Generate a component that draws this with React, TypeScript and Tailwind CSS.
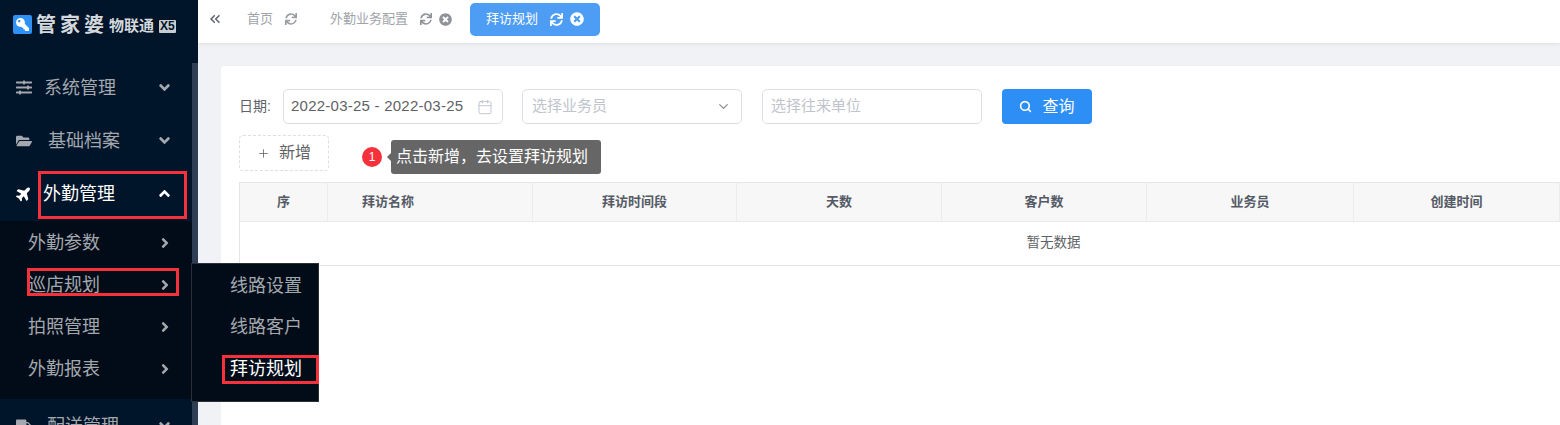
import { ChevronDown, Calendar, Plus, Search, ChevronsLeft } from "lucide-react";
import {
  FaAngleDown,
  FaAngleRight,
  FaAngleUp,
  FaFolderOpen,
  FaKey,
  FaPlane,
  FaSlidersH,
  FaSync,
  FaTimesCircle,
  FaTruck,
} from "react-icons/fa";

const FONT = "font-['Liberation_Sans','Noto_Sans_CJK_SC',sans-serif]";

const subItems = ["外勤参数", "巡店规划", "拍照管理", "外勤报表"];
const flyItems = ["线路设置", "线路客户", "拜访规划"];
const columns = [
  { title: "序", width: "w-[88px]", align: "text-center" },
  { title: "拜访名称", width: "w-[205px]", align: "text-left pl-[34px]" },
  { title: "拜访时间段", width: "w-[204px]", align: "text-center" },
  { title: "天数", width: "w-[205px]", align: "text-center" },
  { title: "客户数", width: "w-[205px]", align: "text-center" },
  { title: "业务员", width: "w-[207px]", align: "text-center" },
  { title: "创建时间", width: "w-[206px]", align: "text-center" },
];

function MenuRow({
  icon,
  label,
  open,
  active,
  gap,
}: {
  icon: React.ReactNode;
  label: string;
  open?: boolean;
  active?: boolean;
  gap: string;
}) {
  return (
    <div className={`flex h-[53px] items-center pl-4 pr-[19px] ${active ? "text-white" : "text-[#a3a8ae]"}`}>
      <span className="flex w-4 justify-center text-[17px]">{icon}</span>
      <span className={`${gap} pt-[2px] text-[18px]`}>{label}</span>
      <span className="ml-auto text-[17px]">{open ? <FaAngleUp /> : <FaAngleDown />}</span>
    </div>
  );
}

function Sidebar() {
  return (
    <aside className="relative h-full w-[198px] shrink-0 overflow-hidden bg-[#00142a]">
      <div className="flex h-[61px] items-center pb-[12px] pl-[13px] text-[#d5d9dd]">
        <span className="flex h-[19px] w-[19px] items-center justify-center rounded-[2px] bg-[#2f90f5] text-[13px] text-white">
          <FaKey className="-scale-x-100" />
        </span>
        <span className="ml-[4px] text-[20px] font-bold leading-none tracking-[4px]">管家婆</span>
        <span className="ml-[1px] mt-[2px] text-[15px] font-bold leading-none">物联通</span>
        <span className="ml-[5px] mt-[3px] rounded-[1px] bg-[#c8ccd0] px-[1px] text-[12px] font-bold leading-[13px] text-[#00142a]">
          X5
        </span>
      </div>
      <div className="w-[192px]">
        <MenuRow icon={<FaSlidersH />} label="系统管理" gap="ml-3" />
        <MenuRow icon={<FaFolderOpen className="text-[20px]" />} label="基础档案" gap="ml-4" />
        <MenuRow icon={<FaPlane className="-rotate-45 text-[17px]" />} label="外勤管理" gap="ml-[11px]" open active />
        <div className="mt-[1px] bg-[#020b18] pb-[9px] pt-[1px]">
          {subItems.map((item) => (
            <div key={item} className="flex h-[42px] items-center pl-7 pr-[19px] text-[#a3a8ae]">
              <span className="text-[18px]">{item}</span>
              <FaAngleRight className="ml-auto text-[16px]" />
            </div>
          ))}
        </div>
        <MenuRow icon={<FaTruck className="text-[18px]" />} label="配送管理" gap="ml-[15px]" />
      </div>
      <div className="absolute bottom-0 right-0 top-[63px] w-[6px] bg-[#2d3e55]" />
    </aside>
  );
}

function Tabs() {
  return (
    <header className="flex h-[43px] shrink-0 items-center bg-white pb-[5px] pl-[9px] shadow-[0_1px_4px_rgba(0,0,0,0.08)]">
      <ChevronsLeft size={16} strokeWidth={2.25} className="text-[#5b6472]" />
      <div className="ml-[24px] flex items-center text-[13px] text-[#a0a4aa]">
        <span>首页</span>
        <FaSync className="ml-[12px] text-[12px] text-[#9a9ea4]" />
      </div>
      <div className="ml-[33px] flex items-center text-[13px] text-[#a0a4aa]">
        <span>外勤业务配置</span>
        <FaSync className="ml-[12px] text-[12px] text-[#8f9399]" />
        <FaTimesCircle className="ml-[7px] text-[13px] text-[#8f9399]" />
      </div>
      <div className="ml-[18px] flex h-[33px] w-[130px] items-center rounded-[5px] bg-[#4d9df5] pl-4 text-[13px] text-white">
        <span>拜访规划</span>
        <FaSync className="ml-[12px] text-[13px]" />
        <FaTimesCircle className="ml-[7px] text-[14px]" />
      </div>
    </header>
  );
}

function Field({ className, children }: { className: string; children: React.ReactNode }) {
  return (
    <div className={`flex h-[35px] items-center rounded-[5px] border border-[#dcdfe6] bg-white text-[15px] ${className}`}>
      {children}
    </div>
  );
}

function Filters() {
  return (
    <div className="flex items-center pt-[23px]">
      <span className="w-[44px] text-[14px] text-[#606266]">日期:</span>
      <Field className="w-[220px] pl-[7px] pr-[9px] text-[#606266]">
        <span className="tracking-[0.24px]">2022-03-25 - 2022-03-25</span>
        <Calendar size={16} strokeWidth={1.25} className="ml-auto text-[#b4bccc]" />
      </Field>
      <Field className="ml-[19px] w-[220px] pl-[9px] pr-[10px] text-[#c0c4cc]">
        <span>选择业务员</span>
        <ChevronDown size={15} className="ml-auto text-[#8b8f97]" />
      </Field>
      <Field className="ml-[20px] w-[220px] pl-[8px] text-[#c0c4cc]">
        <span>选择往来单位</span>
      </Field>
      <button className="ml-[20px] flex h-[35px] w-[90px] items-center justify-center rounded-[4px] bg-[#2d8ff5] text-[16px] text-white">
        <Search size={13} strokeWidth={3} />
        <span className="ml-[10px]">查询</span>
      </button>
    </div>
  );
}

function AddRow() {
  return (
    <div className="mt-[11px] flex h-[36px] items-start">
      <button className="flex h-[36px] w-[90px] items-center justify-center rounded-[4px] border border-dashed border-[#dcdfe6] bg-white text-[16px] text-[#606266]">
        <Plus size={13} strokeWidth={1.5} />
        <span className="ml-[9px]">新增</span>
      </button>
      <span className="ml-[33px] mt-[12px] flex h-5 w-5 shrink-0 items-center justify-center rounded-full bg-[#f5323c] text-[12px] text-white">
        1
      </span>
      <div className="relative ml-[9px] mt-[5px] flex h-[34px] w-[210px] shrink-0 items-center rounded-[3px] bg-[#666666] pl-[5px] text-[16px] text-white">
        <span className="absolute -left-[4px] top-[13px] h-0 w-0 border-y-[4px] border-r-[4px] border-y-transparent border-r-[#666666]" />
        点击新增，去设置拜访规划
      </div>
    </div>
  );
}

function DataTable() {
  return (
    <div className="mt-[11px] w-[1628px] border border-r-0 border-[#e4e5e7]">
      <div className="flex h-[39px] border-b border-[#e8e9eb]">
        {columns.map((col) => (
          <div
            key={col.title}
            className={`${col.width} ${col.align} shrink-0 border-r border-[#ebecee] bg-[#f7f7f7] text-[13px] font-bold leading-[37px] text-[#555b66]`}
          >
            {col.title}
          </div>
        ))}
      </div>
      <div className="flex h-[43px] items-center justify-center text-[13.5px] text-[#606266]">暂无数据</div>
    </div>
  );
}

function Flyout() {
  return (
    <div className="absolute left-[191px] top-[263px] h-[139px] w-[128px] border border-[#2c3138] bg-[#020b18] pt-[1.5px]">
      {flyItems.map((item, i) => (
        <div
          key={item}
          className={`flex h-[41.5px] items-center pl-[38px] text-[18px] ${i === 2 ? "text-white" : "text-[#a3a8ae]"}`}
        >
          {item}
        </div>
      ))}
    </div>
  );
}

export default function App() {
  return (
    <div className={`relative flex h-[425px] w-[1560px] overflow-hidden bg-[#f0f2f5] ${FONT}`}>
      <Sidebar />
      <main className="flex min-w-0 flex-1 flex-col">
        <Tabs />
        <div className="flex-1 overflow-hidden pl-[23px] pt-[23px]">
          <section className="h-[400px] w-[1400px] overflow-hidden rounded-[4px] bg-white pl-[18px]">
            <Filters />
            <AddRow />
            <DataTable />
          </section>
        </div>
      </main>
      <Flyout />
      {/* red annotation boxes */}
      <div className="absolute left-[38px] top-[171px] h-[48px] w-[149px] border-[3px] border-[#f5323c]" />
      <div className="absolute left-[27px] top-[268px] h-[28px] w-[152px] border-[3px] border-[#f5323c]" />
      <div className="absolute left-[222px] top-[355px] h-[29px] w-[97px] border-[3px] border-[#f5323c]" />
    </div>
  );
}
